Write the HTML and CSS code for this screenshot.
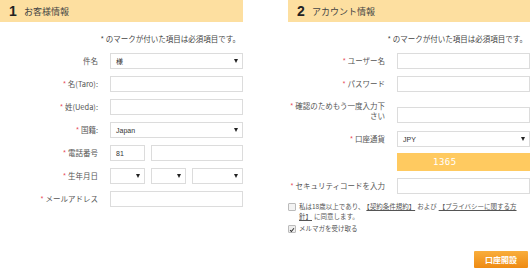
FILE: index.html
```html
<!DOCTYPE html>
<html lang="ja">
<head>
<meta charset="utf-8">
<link rel="stylesheet" href="styles.css">
</head>
<body>
<div class="page">
  <section class="panel left">
    <div class="head"><span class="num">1</span><span class="title">お客様情報</span></div>
    <p class="note">* のマークが付いた項目は必須項目です。</p>
    <div class="form">
      <div class="row"><label class="lbl">件名</label><div class="ctl"><div class="sel"><span>様</span><i class="arrow"></i></div></div></div>
      <div class="row"><label class="lbl"><b class="req">*</b> 名(Taro):</label><div class="ctl"><div class="inp"></div></div></div>
      <div class="row"><label class="lbl"><b class="req">*</b> 姓(Ueda):</label><div class="ctl"><div class="inp"></div></div></div>
      <div class="row"><label class="lbl"><b class="req">*</b> 国籍:</label><div class="ctl"><div class="sel"><span>Japan</span><i class="arrow"></i></div></div></div>
      <div class="row"><label class="lbl"><b class="req">*</b> 電話番号</label><div class="ctl split"><div class="inp w35"><span>81</span></div><div class="inp grow"></div></div></div>
      <div class="row"><label class="lbl"><b class="req">*</b> 生年月日</label><div class="ctl split"><div class="sel w35"><i class="arrow"></i></div><div class="sel w35"><i class="arrow"></i></div><div class="sel grow"><i class="arrow"></i></div></div></div>
      <div class="row"><label class="lbl"><b class="req">*</b> メールアドレス</label><div class="ctl"><div class="inp"></div></div></div>
    </div>
  </section>
  <section class="panel right">
    <div class="head"><span class="num">2</span><span class="title">アカウント情報</span></div>
    <p class="note">* のマークが付いた項目は必須項目です。</p>
    <div class="form">
      <div class="row"><label class="lbl"><b class="req">*</b> ユーザー名</label><div class="ctl"><div class="inp"></div></div></div>
      <div class="row"><label class="lbl"><b class="req">*</b> パスワード</label><div class="ctl"><div class="inp"></div></div></div>
      <div class="row r-confirm"><label class="lbl two"><b class="req">*</b> 確認のためもう一度入力下さい</label><div class="ctl"><div class="inp"></div></div></div>
      <div class="row"><label class="lbl"><b class="req">*</b> 口座通貨</label><div class="ctl"><div class="sel"><span>JPY</span><i class="arrow"></i></div></div></div>
      <div class="row r-captcha"><span class="lbl"></span><div class="ctl"><div class="captcha">1365</div></div></div>
      <div class="row"><label class="lbl"><b class="req">*</b> セキュリティコードを入力</label><div class="ctl"><div class="inp"></div></div></div>
    </div>
    <div class="checks">
      <div class="check"><span class="box"></span><p>私は18歳以上であり、<a class="lnk">【契約条件規約】</a>および<a class="lnk">【プライバシーに関する方針】</a>に同意します。</p></div>
      <div class="check"><span class="box on"><svg viewBox="0 0 8 8" width="8" height="8"><path d="M1.5 4.2 L3.2 6 L6.6 1.6" fill="none" stroke="#333" stroke-width="1.4"/></svg></span><p>メルマガを受け取る</p></div>
    </div>
    <div class="actions"><button class="submit">口座開設</button></div>
  </section>
</div>
</body>
</html>
```
FILE: styles.css
```css
* { box-sizing: border-box; }
html, body { margin: 0; padding: 0; background: #fff; }
body {
  font-family: "Noto Sans CJK JP", "Liberation Sans", sans-serif;
  color: #555;
  width: 530px;
  height: 280px;
  overflow: hidden;
}
.page { display: flex; gap: 45px; }
.panel.left { width: 243px; }
.panel.right { width: 242px; }
.head {
  height: 22px;
  background: #fddfa0;
  display: flex;
  align-items: center;
  padding-left: 9px;
}
.num {
  font-family: "Liberation Sans", sans-serif;
  font-weight: bold;
  font-size: 14px;
  color: #222;
  width: 15px;
}
.title { font-size: 9px; color: #444; }
.note {
  margin: 12px 0 0;
  height: 10px;
  line-height: 10px;
  font-size: 7.5px;
  text-align: right;
  padding-right: 3px;
  color: #444;
}
.form { margin-top: 9px; }
.row { display: flex; align-items: center; height: 16px; margin-bottom: 7px; }
.lbl {
  width: 98px;
  text-align: right;
  font-size: 7.5px;
  line-height: 10px;
  color: #555;
  flex: none;
}
.right .lbl { width: 97px; }
.req { color: #e8505b; font-weight: normal; }
.ctl { margin-left: 12px; flex: 1; display: flex; height: 16px; }
.split { gap: 6px; }
.inp, .sel {
  flex: 1;
  height: 16px;
  border: 1px solid #dcdcdc;
  background: #fff;
  display: flex;
  align-items: center;
  padding-left: 5px;
  font-size: 7px;
  color: #333;
  font-family: "Liberation Sans", "Noto Sans CJK JP", sans-serif;
}
.sel { justify-content: space-between; padding-right: 4px; }
.w35 { flex: none; width: 35px; }
.grow { flex: 1; }
.arrow {
  width: 0; height: 0;
  border-left: 2.5px solid transparent;
  border-right: 2.5px solid transparent;
  border-top: 4px solid #222;
  margin-left: auto;
}
.r-confirm { margin-top: 15px; margin-bottom: 8px; }
.r-confirm .lbl.two { margin-bottom: 8px; }
.r-captcha { height: 18px; margin-top: -1px; }
.r-captcha .ctl { height: 18px; }
.captcha {
  flex: 1;
  height: 18px;
  background: #ffca60;
  color: #fff;
  font-family: "DejaVu Sans Mono", monospace;
  font-size: 9px;
  letter-spacing: 0.5px;
  line-height: 18px;
  padding-left: 36px;
}
.checks { margin-top: 8px; }
.check { display: flex; align-items: flex-start; margin-bottom: 3px; }
.box {
  width: 8px; height: 8px;
  border: 1px solid #bbb;
  border-radius: 1px;
  background: #f3f3f3;
  flex: none;
  margin-top: 1px;
  display: flex;
}
.box.on { background: #eee; }
.check p {
  margin: 0 0 0 3px;
  font-size: 6.5px;
  line-height: 9.5px;
  color: #555;
  width: 222px;
  word-break: break-all;
}
.check a { color: #555; text-decoration: underline; }
.lnk { margin: 0 2px; }
.actions { display: flex; justify-content: flex-end; margin-top: 17px; padding-right: 2px; }
.submit {
  width: 54px;
  height: 17px;
  border: none;
  border-radius: 1px;
  background: linear-gradient(#f9ae3c, #ee8a12);
  color: #fff;
  font-family: "Noto Sans CJK JP", sans-serif;
  font-weight: bold;
  font-size: 8px;
  padding: 0;
}
```
